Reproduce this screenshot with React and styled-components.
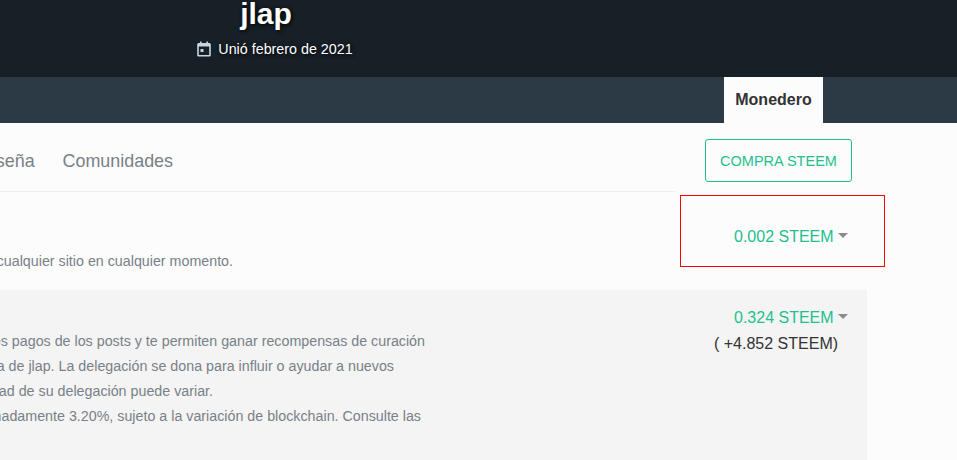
import React from "react";
import styled, { createGlobalStyle } from "styled-components";

const Global = createGlobalStyle`
  html, body { margin: 0; padding: 0; background: #fcfcfc; overflow: hidden; }
  body { font-family: "Liberation Sans", Arial, sans-serif; }
`;

const Viewport = styled.div`
  width: 957px;
  height: 460px;
  overflow: hidden;
  position: relative;
`;

const Page = styled.div`
  width: 1364px;
  margin-left: -407px;
`;

const Hero = styled.header`
  height: 77px;
  background: #171f27;
  color: #fff;
  display: flex;
  flex-direction: column;
  align-items: center;
  overflow: hidden;
  text-shadow: 1px 1px 4px #000;
`;

const Title = styled.h1`
  margin: -7px 18px 0 0;
  font-size: 30px;
  line-height: 42px;
  font-weight: 700;
`;

const Joined = styled.p`
  margin: 4px 0 0;
  font-size: 14.3px;
  line-height: 20px;
  display: flex;
  align-items: center;
  gap: 5px;
`;

const NavBar = styled.nav`
  height: 46px;
  background: #2c3a46;
  display: flex;
  justify-content: flex-end;
  padding-right: 134px;
`;

const NavTab = styled.a`
  width: 99px;
  background: #fcfcfc;
  color: #333;
  font-size: 16px;
  font-weight: 700;
  display: flex;
  align-items: center;
  justify-content: center;
`;

const TabRow = styled.div`
  display: flex;
  height: 69px;
`;

const Tabs = styled.div`
  width: 1082px;
  height: 69px;
  border-bottom: 1px solid #eeeeee;
  display: flex;
  justify-content: flex-end;
  align-items: center;
  padding: 8px 502px 0 0;
  box-sizing: border-box;
  gap: 28px;
  font-size: 17.9px;
  color: #788187;
`;

const BuyButton = styled.button`
  margin: 16px 0 0 30px;
  width: 147px;
  height: 43px;
  background: transparent;
  border: 1px solid #1fbf8f;
  border-radius: 3px;
  color: #1fbf8f;
  font-family: inherit;
  font-size: 14.5px;
  padding: 0;
`;

const Row = styled.section`
  width: 1274px;
  height: ${(p) => p.$height}px;
  background: ${(p) => p.$bg};
  display: flex;
  justify-content: space-between;
  overflow: hidden;
`;

const Copy = styled.div`
  width: 847px;
  padding-top: ${(p) => p.$top}px;
  color: #788187;
  font-size: 14.27px;
  line-height: 25px;
`;

const Line = styled.div`
  display: flex;
  justify-content: flex-end;
  white-space: nowrap;
  padding-right: ${(p) => p.$inset}px;
`;

const Balance = styled.div`
  width: 133px;
  padding-top: ${(p) => p.$top}px;
  font-size: 16px;
  line-height: 24px;
`;

const Amount = styled.div`
  color: #1fbf8f;
  display: flex;
  align-items: center;
  gap: 5px;
`;

const Caret = styled.span`
  width: 0;
  height: 0;
  margin: -3px 0 0 -1px;
  border-left: 5px solid transparent;
  border-right: 5px solid transparent;
  border-top: 5px solid #8a8a8a;
`;

const Extra = styled.div`
  margin: 2px 0 0 -20px;
  color: #333;
`;

const Highlight = styled.div`
  position: absolute;
  left: 680px;
  top: 195px;
  width: 203px;
  height: 70px;
  border: 1px solid #f00;
  pointer-events: none;
`;

const CalendarIcon = () => (
  <svg width="16" height="16" viewBox="1 0 16 16" aria-hidden="true">
    <path
      fill="#c9d4df"
      d="M4 0.5h1.600v1.600h4.800V0.500H12v1.600h1.200c.9 0 1.600.7 1.600 1.600v10.200c0 .9-.7 1.600-1.600 1.600H2.800c-.9 0-1.600-.7-1.600-1.600V3.700c0-.9.7-1.600 1.600-1.600H4V0.500zM2.800 5.500v8.400h10.400V5.500H2.800zM4.500 8h3v3h-3z"
    />
  </svg>
);

export default function App() {
  return (
    <Viewport>
      <Global />
      <Page>
        <Hero>
          <Title>jlap</Title>
          <Joined>
            <CalendarIcon />
            Unió febrero de 2021
          </Joined>
        </Hero>
        <NavBar>
          <NavTab>Monedero</NavTab>
        </NavBar>
        <TabRow>
          <Tabs>
            <span>Contraseña</span>
            <span>Comunidades</span>
          </Tabs>
          <BuyButton>COMPRA STEEM</BuyButton>
        </TabRow>
        <Row $height={98} $bg="#fcfcfc">
          <Copy $top={57}>
            <Line $inset={207}>Tokens comerciables que pueden ser transferidos a cualquier sitio en cualquier momento.</Line>
          </Copy>
          <Balance $top={33}>
            <Amount>
              0.002 STEEM
              <Caret />
            </Amount>
          </Balance>
        </Row>
        <Row $height={170} $bg="#f4f4f4">
          <Copy $top={39}>
            <Line $inset={15}>Influye en las ganancias de los pagos de los posts y te permiten ganar recompensas de curación</Line>
            <Line $inset={46}>Parte del STEEM POWER delegado a la cuenta de jlap. La delegación se dona para influir o ayudar a nuevos</Line>
            <Line $inset={227}>La cantidad de su delegación puede variar.</Line>
            <Line $inset={19}>El APR es de aproximadamente 3.20%, sujeto a la variación de blockchain. Consulte las</Line>
          </Copy>
          <Balance $top={16}>
            <Amount>
              0.324 STEEM
              <Caret />
            </Amount>
            <Extra>( +4.852 STEEM)</Extra>
          </Balance>
        </Row>
      </Page>
      <Highlight />
    </Viewport>
  );
}
